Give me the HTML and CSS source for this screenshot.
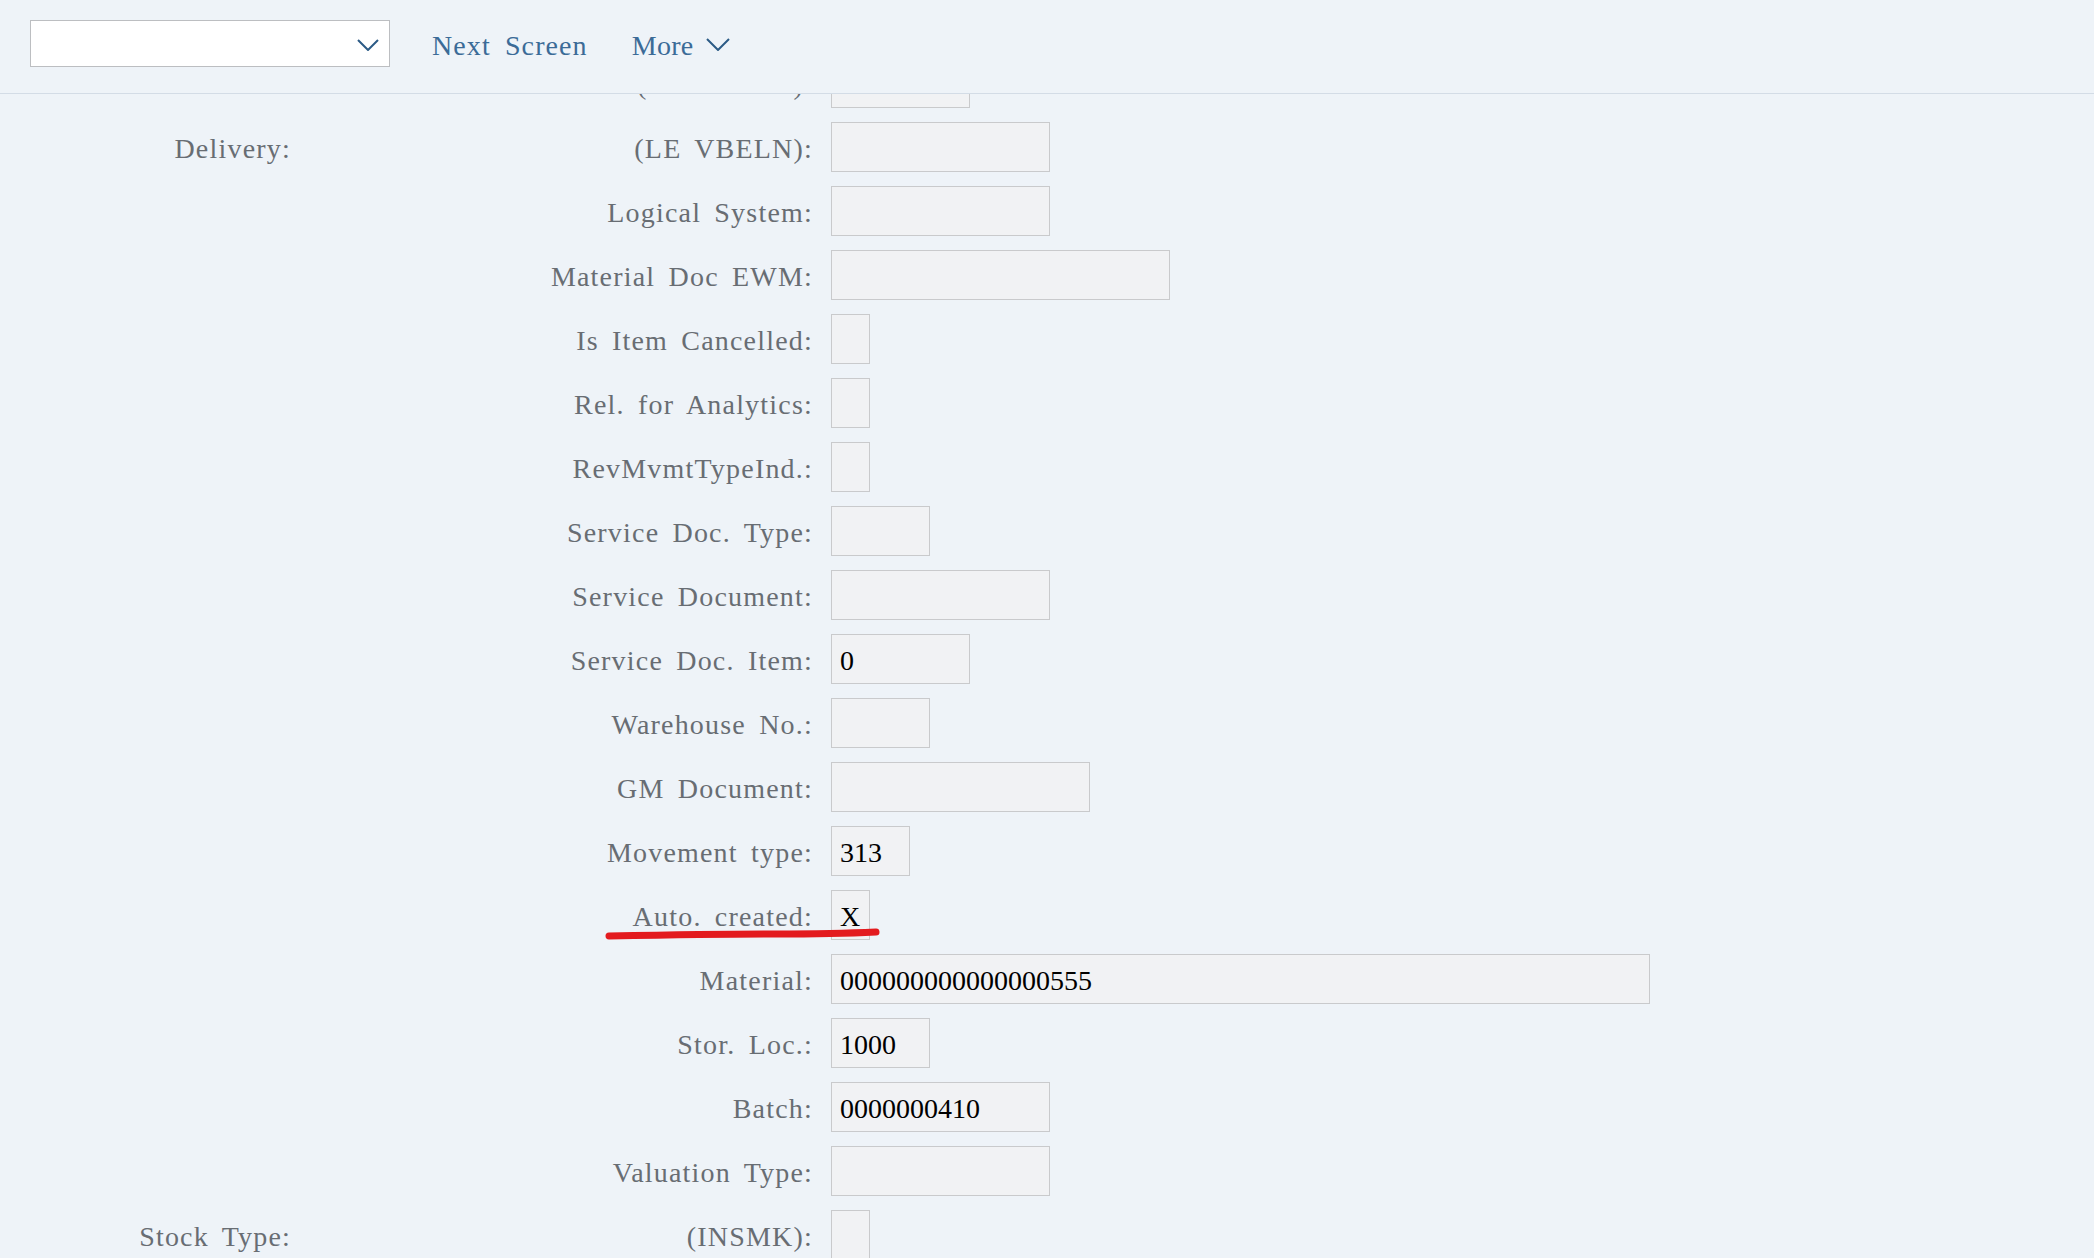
FILE: index.html
```html
<!DOCTYPE html>
<html>
<head>
<meta charset="utf-8">
<link rel="stylesheet" href="styles.css">
</head>
<body>
<div class="screen">
  <header class="toolbar">
    <div class="select">
      <svg class="select-chev" width="22" height="12" viewBox="0 0 22 12"><path d="M1 1 L11 11 L21 1" fill="none" stroke="#2c5b86" stroke-width="2"/></svg>
    </div>
    <span class="link">Next Screen</span>
    <span class="link more">More
      <svg class="more-chev" width="24" height="13" viewBox="0 0 24 13"><path d="M1 1 L12 12 L23 1" fill="none" stroke="#2c5b86" stroke-width="2"/></svg>
    </span>
  </header>

  <main class="form">
    <div class="row"><span class="lead"></span><span class="label">(LE POSNR):</span><span class="field w7"></span></div>
    <div class="row"><span class="lead">Delivery:</span><span class="label">(LE VBELN):</span><span class="field w11"></span></div>
    <div class="row"><span class="lead"></span><span class="label">Logical System:</span><span class="field w11"></span></div>
    <div class="row"><span class="lead"></span><span class="label">Material Doc EWM:</span><span class="field w17"></span></div>
    <div class="row"><span class="lead"></span><span class="label">Is Item Cancelled:</span><span class="field w2"></span></div>
    <div class="row"><span class="lead"></span><span class="label">Rel. for Analytics:</span><span class="field w2"></span></div>
    <div class="row"><span class="lead"></span><span class="label">RevMvmtTypeInd.:</span><span class="field w2"></span></div>
    <div class="row"><span class="lead"></span><span class="label">Service Doc. Type:</span><span class="field w5"></span></div>
    <div class="row"><span class="lead"></span><span class="label">Service Document:</span><span class="field w11"></span></div>
    <div class="row"><span class="lead"></span><span class="label">Service Doc. Item:</span><span class="field w7">0</span></div>
    <div class="row"><span class="lead"></span><span class="label">Warehouse No.:</span><span class="field w5"></span></div>
    <div class="row"><span class="lead"></span><span class="label">GM Document:</span><span class="field w13"></span></div>
    <div class="row"><span class="lead"></span><span class="label">Movement type:</span><span class="field w4">313</span></div>
    <div class="row marked"><span class="lead"></span><span class="label">Auto. created:</span><span class="field w2">X</span>
      <svg class="scribble" width="278" height="16" viewBox="0 0 278 16"><path d="M4 10 C 60 9, 120 8, 170 8 S 250 7, 271 6" fill="none" stroke="#e31b1f" stroke-width="7" stroke-linecap="round"/></svg>
    </div>
    <div class="row"><span class="lead"></span><span class="label">Material:</span><span class="field w41">000000000000000555</span></div>
    <div class="row"><span class="lead"></span><span class="label">Stor. Loc.:</span><span class="field w5">1000</span></div>
    <div class="row"><span class="lead"></span><span class="label">Batch:</span><span class="field w11">0000000410</span></div>
    <div class="row"><span class="lead"></span><span class="label">Valuation Type:</span><span class="field w11"></span></div>
    <div class="row"><span class="lead">Stock Type:</span><span class="label">(INSMK):</span><span class="field w2"></span></div>
  </main>
</div>
</body>
</html>
```

FILE: styles.css
```css
html, body {
  margin: 0;
  padding: 0;
  background: #eef3f8;
}

body {
  font-family: "Liberation Serif", "Noto Sans CJK SC", serif;
  font-size: 28px;
}

.screen {
  position: relative;
  width: 2094px;
  height: 1258px;
  overflow: hidden;
  background: #eef3f8;
}

.toolbar {
  position: absolute;
  top: 0;
  left: 0;
  right: 0;
  height: 94px;
  border-bottom: 1px solid #d3dce6;
  background: #eef3f8;
  z-index: 2;
  display: flex;
  align-items: flex-start;
  padding: 20px 0 0 30px;
  box-sizing: border-box;
}

.select {
  position: relative;
  width: 360px;
  height: 47px;
  box-sizing: border-box;
  background: #ffffff;
  border: 1px solid #bcbec1;
  margin-right: 42px;
}

.select-chev {
  position: absolute;
  right: 10px;
  top: 18px;
}

.link {
  color: #3b6b97;
  line-height: 47px;
  padding-top: 2px;
  letter-spacing: 1.1px;
  word-spacing: 6px;
  margin-right: 44px;
  display: flex;
  align-items: center;
}

.more {
  letter-spacing: 0.3px;
}

.more-chev {
  margin-left: 12px;
  margin-top: -2px;
}

.form {
  display: flex;
  flex-direction: column;
  gap: 14px;
  padding-top: 58px;
}

.row {
  position: relative;
  display: flex;
  align-items: center;
  height: 50px;
}

.lead,
.label {
  flex: none;
  text-align: right;
  color: #686d73;
  letter-spacing: 1.2px;
  word-spacing: 5px;
  white-space: nowrap;
  padding-top: 3px;
}

.lead {
  width: 291px;
}

.label {
  width: 522px;
  margin-right: 18px;
}

.field {
  flex: none;
  height: 50px;
  box-sizing: border-box;
  background: #f1f2f4;
  border: 1px solid #c9cacc;
  color: #000000;
  line-height: 48px;
  padding-left: 8px;
  padding-top: 2px;
  white-space: nowrap;
  overflow: hidden;
}

.w2 { width: 39px; }
.w4 { width: 79px; }
.w5 { width: 99px; }
.w7 { width: 139px; }
.w11 { width: 219px; }
.w13 { width: 259px; }
.w17 { width: 339px; }
.w41 { width: 819px; }

.scribble {
  position: absolute;
  left: 605px;
  top: 36px;
}
```
